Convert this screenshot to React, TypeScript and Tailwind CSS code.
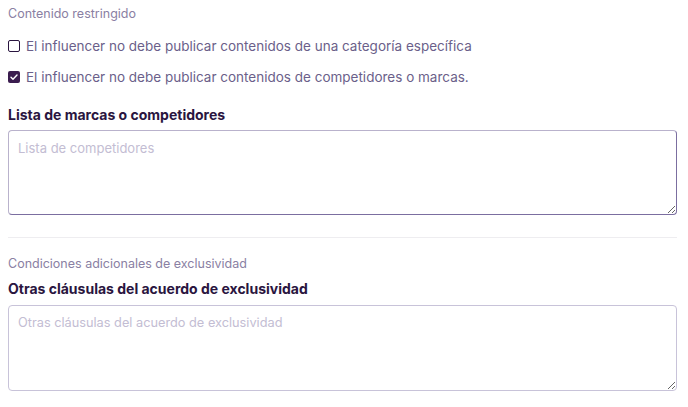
export default function App() {
  return (
    <div className="min-h-screen bg-white px-2 pt-[5px] font-['Inter',sans-serif] w-[688px]">
      <div className="w-[669px]">
        <p className="text-[12.5px] leading-[18px] text-[#8a80a3]">Contenido restringido</p>

        <div className="mt-[14px] flex flex-col gap-[13px]">
          <label className="flex items-center gap-[6px] text-[13.5px] leading-[18px] text-[#6b5f8a]">
            <span className="h-3 w-3 rounded-[2px] border border-[#2a1540] bg-white" />
            El influencer no debe publicar contenidos de una categoría específica
          </label>
          <label className="flex items-center gap-[6px] text-[13.5px] leading-[18px] text-[#6b5f8a]">
            <span className="flex h-3 w-3 items-center justify-center rounded-[2px] bg-[#3b1d4f]">
              <svg viewBox="0 0 12 12" className="h-3 w-3" fill="none">
                <path d="M3 6.2l2 2 4-4.2" stroke="#ffffff" strokeWidth="1.4" strokeLinecap="round" strokeLinejoin="round" />
              </svg>
            </span>
            El influencer no debe publicar contenidos de competidores o marcas.
          </label>
        </div>

        <h3 className="mt-[19px] text-[14px] font-bold leading-[20px] text-[#2a1540]">
          Lista de marcas o competidores
        </h3>
        <textarea
          placeholder="Lista de competidores"
          className="mt-[5px] block h-[85px] w-full rounded-[4px] border border-t-[#b9b2cc] border-l-[#b9b2cc] border-r-[#7b6ea0] border-b-[#7b6ea0] px-[9px] py-[8px] text-[13px] leading-[18px] text-[#2a1540] outline-none placeholder:text-[#c3bdd3]"
        />

        <div className="mt-[22px] h-px w-full bg-[#eeedf0]" />

        <p className="mt-[17px] text-[12.5px] leading-[18px] text-[#8a80a3]">
          Condiciones adicionales de exclusividad
        </p>
        <h3 className="mt-[6px] text-[14px] font-bold leading-[20px] text-[#2a1540]">
          Otras cláusulas del acuerdo de exclusividad
        </h3>
        <textarea
          placeholder="Otras cláusulas del acuerdo de exclusividad"
          className="mt-[6px] block h-[86px] w-full rounded-[4px] border border-[#c8c3d9] px-[9px] py-[8px] text-[12.75px] leading-[18px] text-[#2a1540] outline-none placeholder:text-[#c3bdd3]"
        />
      </div>
    </div>
  );
}
